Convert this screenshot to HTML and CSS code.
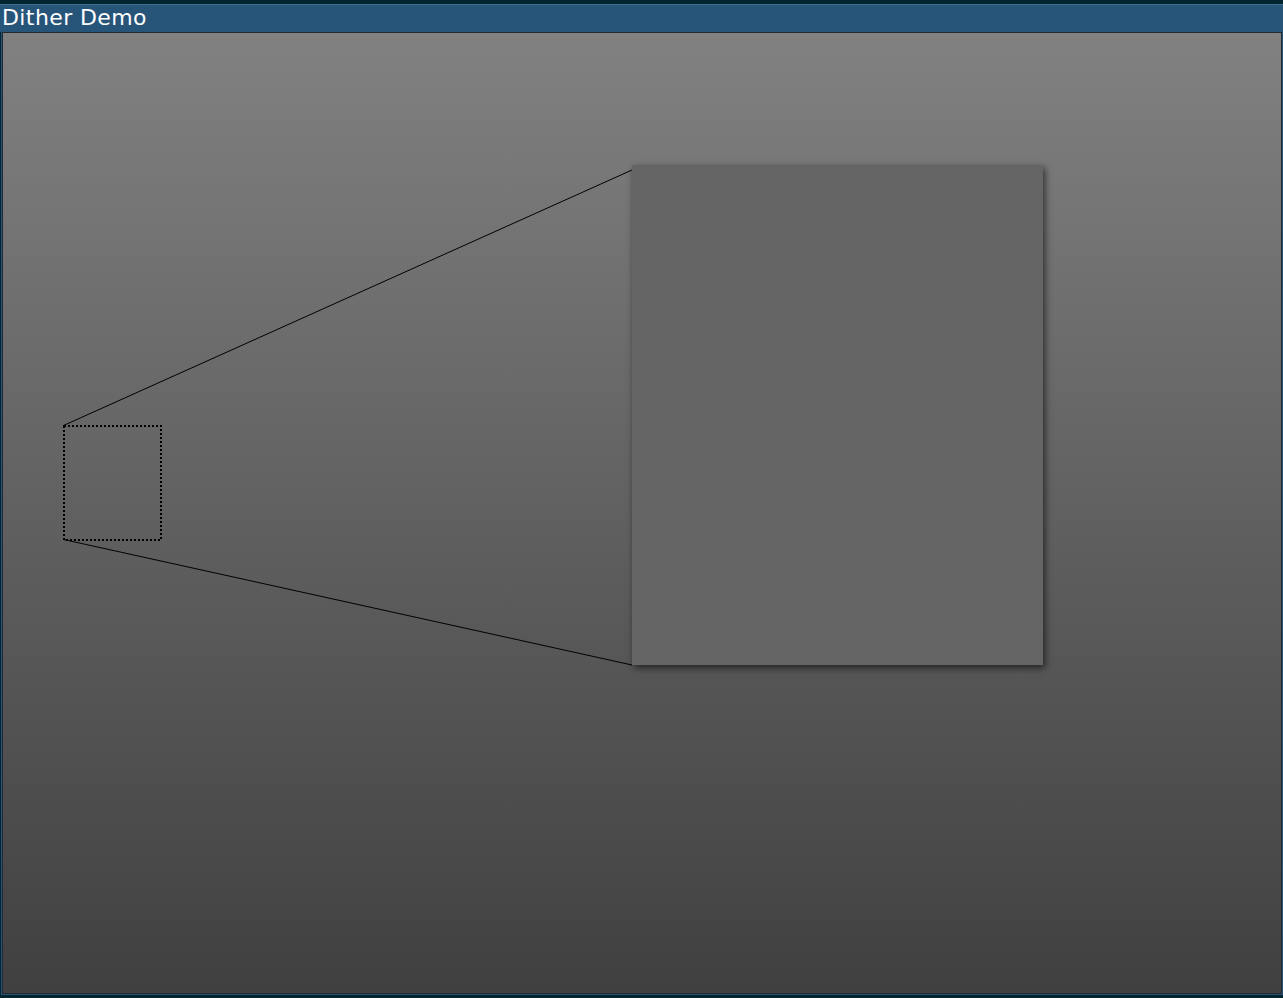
FILE: index.html
```html
<!DOCTYPE html>
<html>
<head>
<meta charset="utf-8">
<title>Dither Demo</title>
<link rel="stylesheet" href="styles.css">
</head>
<body>
<div class="window">
  <div class="titlebar">Dither Demo</div>
  <div class="canvas">
    <svg class="overlay" width="1278" height="960" viewBox="0 0 1278 960">
      <line x1="60.5" y1="392.5" x2="629" y2="137" stroke="#000" stroke-width="1"/>
      <line x1="60.5" y1="506.5" x2="629" y2="632" stroke="#000" stroke-width="1"/>
      <rect x="61" y="393" width="97" height="114" fill="none" stroke="#000" stroke-width="2" stroke-dasharray="2 2"/>
    </svg>
    <div class="magnifier"></div>
  </div>
</div>
</body>
</html>
```
FILE: styles.css
```css
html, body {
  margin: 0;
  padding: 0;
  width: 1283px;
  height: 998px;
  overflow: hidden;
  background: #032530;
}
.window {
  box-sizing: border-box;
  width: 1283px;
  height: 998px;
  padding-top: 4px;
  padding-bottom: 2px;
  display: flex;
  flex-direction: column;
}
.titlebar {
  height: 28px;
  background: #27557a;
  border-top: 1px solid #3d6d90;
  box-sizing: border-box;
  color: #ffffff;
  font-family: "DejaVu Sans", sans-serif;
  font-size: 22px;
  letter-spacing: 0.4px;
  line-height: 25px;
  padding-left: 2px;
  flex: none;
}
.canvas {
  position: relative;
  flex: 1;
  background: linear-gradient(to bottom, #818181, #404040);
  border: 1px solid #222a30;
  margin: 0 1px 2px 2px;
  box-shadow: 0 0 0 1px #27557a;
  overflow: hidden;
}
.overlay {
  position: absolute;
  left: 0;
  top: 0;
}
.magnifier {
  position: absolute;
  left: 629px;
  top: 132px;
  width: 411px;
  height: 500px;
  background: #656565;
  box-shadow: 2px 3px 7px rgba(0,0,0,0.6);
}
```
